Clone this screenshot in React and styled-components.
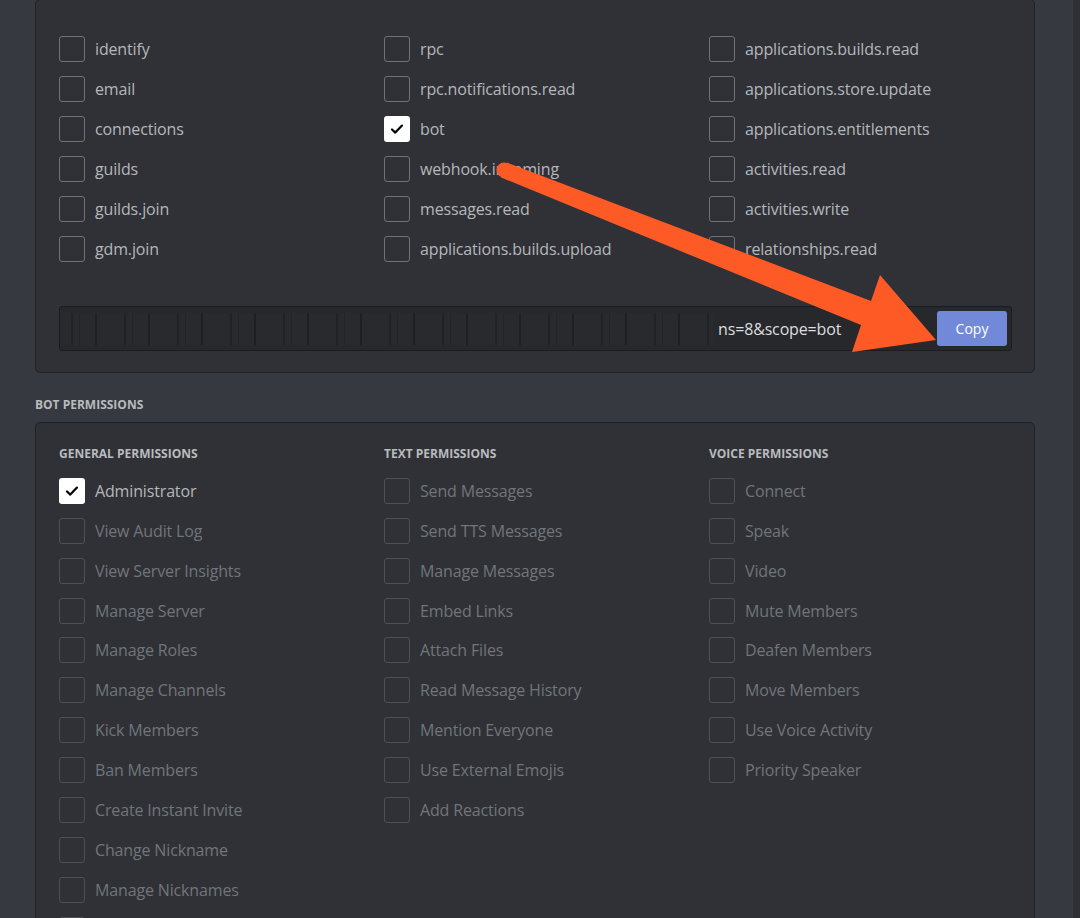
import styled, { createGlobalStyle } from "styled-components";

const GlobalStyle = createGlobalStyle`
  html, body {
    margin: 0;
    padding: 0;
    height: 918px;
    overflow: hidden;
    background: #36393f;
  }
  body {
    font-family: "Open Sans", "Noto Sans", sans-serif;
  }
`;

const Page = styled.div`
  position: relative;
  display: flex;
  width: 1080px;
  height: 918px;
  overflow: hidden;
  background: #36393f;
`;

const Content = styled.main`
  flex: 1;
  padding-left: 35px;
`;

const ScrollTrack = styled.div`
  width: 7px;
  background: #2e3035;
`;

const Panel = styled.section`
  width: 1000px;
  box-sizing: border-box;
  background: #2f3136;
  border: 1px solid #202225;
  border-radius: 5px;
  margin-top: ${(p) => p.$offset || 0}px;
  padding: ${(p) => p.$pad};
`;

const ScopeGrid = styled.div`
  display: grid;
  grid-template-columns: repeat(3, 325px);
  grid-template-rows: repeat(6, 26px);
  grid-auto-flow: column;
  row-gap: 14px;
`;

const Row = styled.label`
  display: flex;
  align-items: center;
  gap: 10px;
  height: 26px;
  font-size: 16px;
  letter-spacing: -0.15px;
  color: ${(p) => (p.$dim ? "#71757b" : "#b5b7bb")};
  white-space: nowrap;
`;

const Box = styled.span`
  width: 26px;
  height: 26px;
  box-sizing: border-box;
  border-radius: 3px;
  flex-shrink: 0;
  display: flex;
  align-items: center;
  justify-content: center;
  background: ${(p) => (p.$checked ? "#ffffff" : "transparent")};
  border: ${(p) =>
    p.$checked ? "none" : `1px solid ${p.$dim ? "#4d5056" : "#6e7177"}`};
`;

const LinkField = styled.div`
  margin-top: 44px;
  height: 45px;
  box-sizing: border-box;
  display: flex;
  align-items: center;
  background: #26282c;
  border: 1px solid #1b1c1f;
  border-radius: 3px;
  padding: 0 4px 0 2px;
`;

const Redacted = styled.span`
  width: 652px;
  height: 32px;
  flex-shrink: 0;
  background-color: #2a2c30;
  background-image: repeating-linear-gradient(
    90deg,
    transparent 0 9px,
    #1f2023 9px 11px,
    transparent 11px 17px,
    #222326 17px 18px,
    transparent 18px 33px,
    #1d1e21 33px 35px,
    transparent 35px 53px
  );
  opacity: 0.7;
`;

const LinkText = styled.span`
  flex: 1;
  padding-left: 4px;
  font-size: 16px;
  letter-spacing: -0.15px;
  color: #dcddde;
`;

const CopyButton = styled.button`
  width: 70px;
  height: 35px;
  border: none;
  border-radius: 3px;
  background: #7289da;
  color: #ffffff;
  font-family: "Open Sans", "Noto Sans", sans-serif;
  font-size: 14px;
`;

const SectionLabel = styled.h2`
  margin: 24px 0 9px;
  height: 16px;
  line-height: 16px;
  font-size: 12px;
  font-weight: 700;
  color: #b9bbbe;
  text-transform: uppercase;
`;

const PermGrid = styled.div`
  display: grid;
  grid-template-columns: repeat(3, 325px);
`;

const PermColumn = styled.div`
  display: flex;
  flex-direction: column;
  gap: 13.9px;
`;

const ColumnTitle = styled.h3`
  margin: 0 0 2px;
  height: 16px;
  line-height: 16px;
  font-size: 12px;
  font-weight: 700;
  color: #b9bbbe;
  text-transform: uppercase;
`;

const ArrowLayer = styled.svg`
  position: absolute;
  top: 0;
  left: 0;
  pointer-events: none;
`;

const Check = () => (
  <svg width="16" height="16" viewBox="0 0 16 16">
    <path
      d="M3 8.5 L6.3 11.6 L13 4.6"
      fill="none"
      stroke="#000"
      strokeWidth="2.2"
      strokeLinecap="round"
      strokeLinejoin="round"
    />
  </svg>
);

const Checkbox = ({ label, checked, dim }) => (
  <Row $dim={dim}>
    <Box $checked={checked} $dim={dim}>
      {checked && <Check />}
    </Box>
    {label}
  </Row>
);

const scopes = [
  "identify", "email", "connections", "guilds", "guilds.join", "gdm.join",
  "rpc", "rpc.notifications.read", "bot", "webhook.incoming", "messages.read",
  "applications.builds.upload",
  "applications.builds.read", "applications.store.update",
  "applications.entitlements", "activities.read", "activities.write",
  "relationships.read",
];

const permissions = [
  {
    title: "General Permissions",
    items: [
      "Administrator", "View Audit Log", "View Server Insights", "Manage Server",
      "Manage Roles", "Manage Channels", "Kick Members", "Ban Members",
      "Create Instant Invite", "Change Nickname", "Manage Nicknames",
      "Manage Emojis",
    ],
  },
  {
    title: "Text Permissions",
    items: [
      "Send Messages", "Send TTS Messages", "Manage Messages", "Embed Links",
      "Attach Files", "Read Message History", "Mention Everyone",
      "Use External Emojis", "Add Reactions",
    ],
  },
  {
    title: "Voice Permissions",
    items: [
      "Connect", "Speak", "Video", "Mute Members", "Deafen Members",
      "Move Members", "Use Voice Activity", "Priority Speaker",
    ],
  },
];

const App = () => {
  return (
    <Page>
      <GlobalStyle />
      <Content>
        <Panel $offset={-1} $pad="36px 22px 21px 23px">
          <ScopeGrid>
            {scopes.map((s) => (
              <Checkbox key={s} label={s} checked={s === "bot"} />
            ))}
          </ScopeGrid>
          <LinkField>
            <Redacted />
            <LinkText>ns=8&amp;scope=bot</LinkText>
            <CopyButton>Copy</CopyButton>
          </LinkField>
        </Panel>

        <SectionLabel>Bot Permissions</SectionLabel>

        <Panel $pad="23px 22px 0 23px">
          <PermGrid>
            {permissions.map((col) => (
              <PermColumn key={col.title}>
                <ColumnTitle>{col.title}</ColumnTitle>
                {col.items.map((p) => (
                  <Checkbox
                    key={p}
                    label={p}
                    checked={p === "Administrator"}
                    dim={p !== "Administrator"}
                  />
                ))}
              </PermColumn>
            ))}
          </PermGrid>
        </Panel>
      </Content>
      <ScrollTrack />

      <ArrowLayer width="1080" height="918" viewBox="0 0 1080 918">
        <circle cx="504" cy="170" r="7.5" fill="#fd5a26" />
        <polygon
          points="507,162.5 871,301 880,275 936,340 852,352 861,325 501,177.5"
          fill="#fd5a26"
        />
      </ArrowLayer>
    </Page>
  );
};

export default App;
